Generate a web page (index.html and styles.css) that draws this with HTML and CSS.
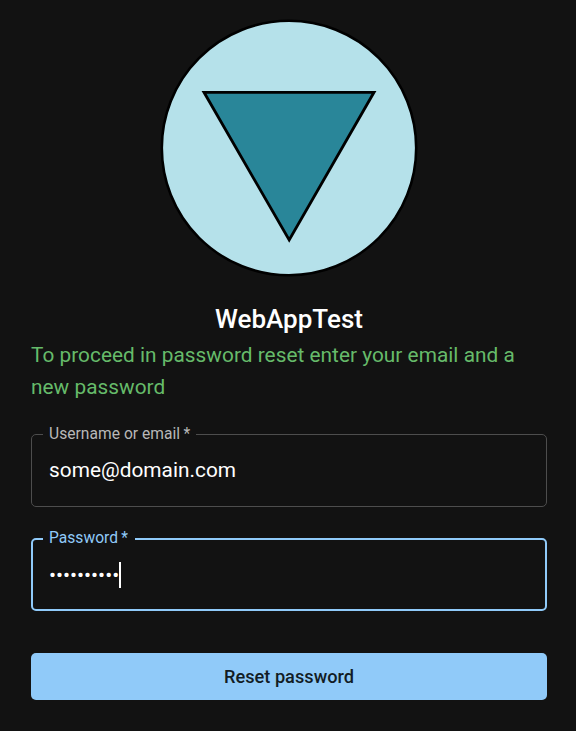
FILE: index.html
```html
<!DOCTYPE html>
<html lang="en">
<head>
<meta charset="utf-8">
<title>WebAppTest</title>
<link rel="stylesheet" href="styles.css">
</head>
<body>
<main class="page">
  <svg class="logo" viewBox="0 0 258 258" aria-hidden="true">
    <circle cx="129" cy="129" r="127.2" fill="#b5e1ea" stroke="#000" stroke-width="2.6"/>
    <path d="M44 73.3H214L129.2 221Z" fill="#298699" stroke="#000" stroke-width="2.8"/>
  </svg>
  <h1 class="title">WebAppTest</h1>
  <p class="message">To proceed in password reset enter your email and a new password</p>
  <form class="form">
    <fieldset class="field">
      <legend class="label">Username or email&thinsp;*</legend>
      <div class="value">some@domain.com</div>
    </fieldset>
    <fieldset class="field focused">
      <legend class="label">Password&thinsp;*</legend>
      <div class="value"><span class="dots">••••••••••</span><span class="caret"></span></div>
    </fieldset>
    <button class="submit" type="button">Reset password</button>
  </form>
</main>
</body>
</html>
```
FILE: styles.css
```css
* { box-sizing: border-box; }
body { margin: 0; background: #121212; color: #fff; font-family: Roboto, sans-serif; }
.page { display: flex; flex-direction: column; padding: 19px 29px 0 31px; }
.logo { width: 258px; height: 258px; align-self: center; }
.title { margin: 22px 0 0; text-align: center; font-size: 26px; line-height: 40px; font-weight: 500; }
.message { margin: 0; color: #66bb6a; font-size: 20.8px; line-height: 32px; letter-spacing: 0.03px; }
.form { display: flex; flex-direction: column; margin-top: 22px; }
.field { height: 82px; margin: 0; padding: 0 17px; border: 1px solid #4d4d4d; border-radius: 5px; min-width: 0; }
.label { height: 18px; margin-left: -6px; padding: 0 6px; font-size: 15.6px; line-height: 18px; letter-spacing: 0.03px; color: #b8b8b8; }
.value { display: flex; align-items: center; height: 54px; font-size: 20.8px; letter-spacing: 0.03px; }
.field.focused { margin-top: 22px; padding: 0 16px; border: 2px solid #90caf9; }
.focused .label { height: 20px; padding-right: 7px; color: #90caf9; }
.focused .value { height: 52px; }
.dots { letter-spacing: 0; }
.caret { width: 2px; height: 26px; background: #fff; }
.submit { height: 47px; margin-top: 42px; padding: 0; border: 0; border-radius: 5px; background: #90caf9; color: #121c25; font: 500 18.2px/47px Roboto, sans-serif; }
```
